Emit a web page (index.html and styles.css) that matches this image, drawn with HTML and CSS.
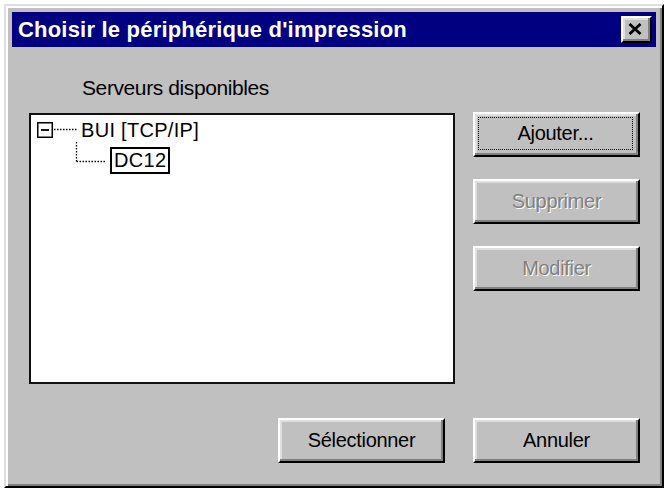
FILE: index.html
```html
<!DOCTYPE html>
<html lang="fr">
<head>
<meta charset="utf-8">
<title>Choisir le périphérique d'impression</title>
<link rel="stylesheet" href="styles.css">
</head>
<body>
<div class="dialog">
  <div class="titlebar">
    <span class="title">Choisir le périphérique d'impression</span>
    <button class="close" aria-label="Fermer">
      <svg width="14" height="12" viewBox="0 0 14 12"><path d="M1.5 1 L12.5 11 M12.5 1 L1.5 11" stroke="#000" stroke-width="2.8" fill="none"/></svg>
    </button>
  </div>
  <div class="content">
    <div class="main">
      <div class="left">
        <div class="label">Serveurs disponibles</div>
        <div class="tree">
          <div class="row row1">
            <svg class="conn1" width="44" height="24" viewBox="0 0 44 24">
              <rect x="0.75" y="4.75" width="14.5" height="14.5" fill="#fff" stroke="#000" stroke-width="1.5"/>
              <line x1="4" y1="12" x2="12" y2="12" stroke="#000" stroke-width="1.8"/>
              <line x1="17" y1="11.5" x2="40" y2="11.5" stroke="#000" stroke-width="1.3" stroke-dasharray="1.5 1.5"/>
            </svg>
            <span class="node">BUI [TCP/IP]</span>
          </div>
          <div class="row row2">
            <svg class="conn2" width="35" height="32" viewBox="0 0 35 32">
              <line x1="1.5" y1="0" x2="1.5" y2="19.5" stroke="#000" stroke-width="1.3" stroke-dasharray="1.5 1.5"/>
              <line x1="1.5" y1="19.5" x2="31" y2="19.5" stroke="#000" stroke-width="1.3" stroke-dasharray="1.5 1.5"/>
            </svg>
            <span class="node selected">DC12</span>
          </div>
        </div>
      </div>
      <div class="side">
        <button class="btn default"><span class="focus">Ajouter...</span></button>
        <button class="btn disabled">Supprimer</button>
        <button class="btn disabled">Modifier</button>
      </div>
    </div>
    <div class="footer">
      <button class="btn">Sélectionner</button>
      <button class="btn">Annuler</button>
    </div>
  </div>
</div>
</body>
</html>
```

FILE: styles.css
```css
html, body {
  margin: 0;
  padding: 0;
  background: #ffffff;
}
body {
  font-family: "Liberation Sans", Arial, sans-serif;
}
.dialog {
  margin: 4px 0 0 4px;
  width: 660px;
  height: 484px;
  box-sizing: border-box;
  background: #c0c0c0;
  border: 2px solid;
  border-color: #dfdfdf #000 #000 #dfdfdf;
  box-shadow: inset 2px 2px #fff, inset -2px -2px #808080;
  padding: 6px;
  display: flex;
  flex-direction: column;
}
.titlebar {
  height: 35px;
  background: #000080;
  display: flex;
  align-items: center;
  justify-content: space-between;
  padding: 0 4px 0 6px;
  flex-shrink: 0;
}
.title {
  color: #fff;
  font-weight: bold;
  font-size: 22px;
  letter-spacing: 0.2px;
  line-height: 35px;
  white-space: nowrap;
}
.close {
  width: 31px;
  height: 27px;
  box-sizing: border-box;
  padding: 0 3px 2px 0;
  margin: 0;
  background: #c0c0c0;
  border: 2px solid;
  border-color: #fff #000 #000 #fff;
  box-shadow: inset -2px -2px #808080, inset 2px 2px #dfdfdf;
  display: flex;
  align-items: center;
  justify-content: center;
}
.close svg {
  display: block;
}
.content {
  flex: 1;
  padding: 29px 16px 0 17px;
  display: flex;
  flex-direction: column;
}
.main {
  display: flex;
  gap: 18px;
}
.left {
  width: 426px;
}
.label {
  margin-left: 53px;
  font-size: 21px;
  letter-spacing: -0.4px;
  line-height: 24px;
  height: 24px;
  margin-bottom: 13px;
}
.tree {
  height: 271px;
  box-sizing: border-box;
  background: #fff;
  border: 2px solid #111;
  padding-top: 3px;
}
.row {
  display: flex;
  align-items: flex-start;
}
.row1 {
  padding-left: 6px;
  height: 24px;
}
.row2 {
  padding-left: 44px;
  height: 32px;
}
.conn1, .conn2 {
  display: block;
  flex-shrink: 0;
}
.node {
  font-size: 20px;
  line-height: 24px;
  letter-spacing: 0.3px;
  white-space: nowrap;
}
.selected {
  margin-top: 5px;
  border: 2px solid #000;
  line-height: 23px;
  padding: 0 2px 0 2px;
}
.side {
  display: flex;
  flex-direction: column;
  gap: 22px;
  padding-top: 36px;
}
.btn {
  width: 167px;
  height: 45px;
  box-sizing: border-box;
  margin: 0;
  padding: 0;
  background: #c0c0c0;
  border: 2px solid;
  border-color: #fff #000 #000 #fff;
  box-shadow: inset -2px -2px #808080, inset 2px 2px #dfdfdf;
  font-family: "Liberation Sans", Arial, sans-serif;
  font-size: 20px;
  letter-spacing: -0.3px;
  color: #000;
  display: flex;
  align-items: center;
  justify-content: center;
}
.default {
  align-items: stretch;
  padding: 3px 5px 5px 3px;
}
.focus {
  flex: 1;
  border: 1px dotted #000;
  display: flex;
  align-items: center;
  justify-content: center;
}
.disabled {
  color: #808080;
  text-shadow: 1px 1px 0 #fff;
}
.footer {
  margin-top: 34px;
  display: flex;
  justify-content: flex-end;
  gap: 28px;
}
```
